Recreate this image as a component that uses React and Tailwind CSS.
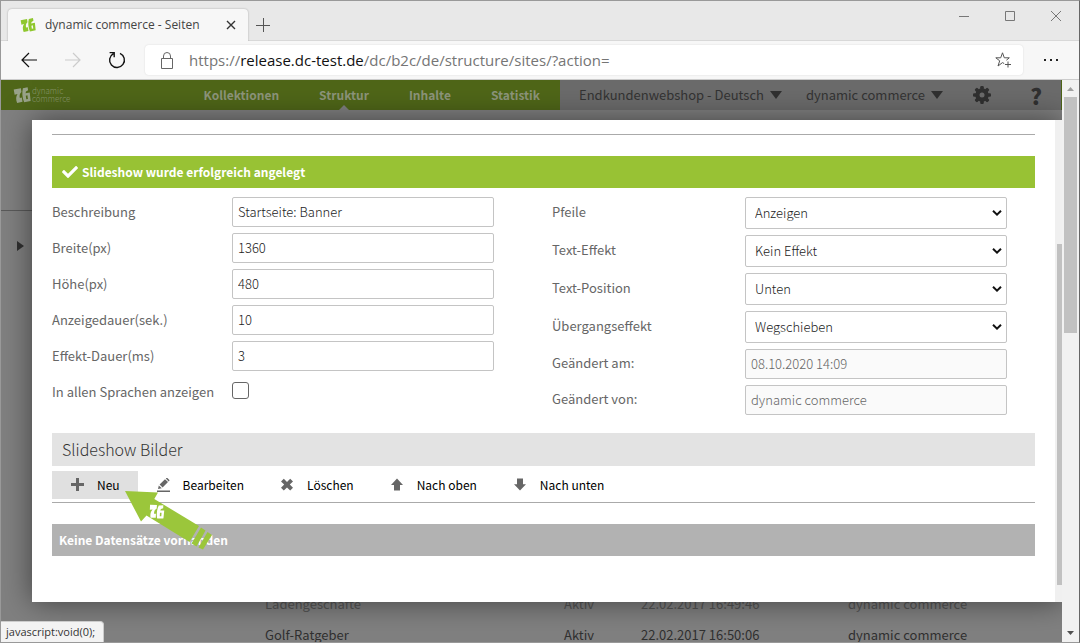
import { useState } from "react";
import { FaCheck } from "react-icons/fa";

const UI = "font-['Noto_Sans_CJK_SC','Noto_Sans',sans-serif]";
const CHROME = "font-['Open_Sans','Noto_Sans',sans-serif]";

function Mark({ color, ...rest }) {
  return (
    <svg viewBox="0 0 20 20" fill="none" aria-hidden="true" {...rest}>
      <path fill={color} d="M.8 4 8.8 2.4 9.4 6.6C7.4 8.4 7 10.4 7.6 13.2L9.8 12.8 10.6 17.6 4.6 18.8C3 14.8 3.2 11.4 5 8.8L1.8 9.6Z" />
      <path fill={color} fillRule="evenodd" d="M11 2.6 16.2 1.4 16.8 4.8 14.4 6.2 14 8 18.6 7.2 19.6 16.6 12.4 18C10.2 13 9.8 7.4 11 2.6ZM14.2 10.8 14.8 14.8 16.6 14.4 16 10.4Z" />
    </svg>
  );
}

function Gear() {
  return (
    <svg viewBox="0 0 18 18" className="h-[18px] w-[18px]" aria-hidden="true">
      <g fill="#303030">
        {[0, 45, 90, 135].map((a) => (
          <rect key={a} x="7.2" y="0" width="3.6" height="18" rx="1.2" transform={`rotate(${a} 9 9)`} />
        ))}
        <circle cx="9" cy="9" r="6.7" />
      </g>
      <circle cx="9" cy="9" r="2.5" fill="#6b6b6b" />
    </svg>
  );
}

function TitleBar() {
  return (
    <div className="flex h-10 shrink-0 items-end justify-between bg-[#e8e8e8] pl-[7px] shadow-[inset_0_-1px_0_#d8d8d8]">
      <div className="flex h-full items-end">
        <div className="flex h-8 w-60 items-center rounded-t bg-[#f7f7f7] pl-3 pr-3 shadow-[0_0_2px_rgba(0,0,0,0.3)]">
          <Mark className="h-4 w-4" color="#8fc72e" />
          <span className="ml-[9px] flex-1 whitespace-nowrap text-xs text-[#444]">dynamic commerce - Seiten</span>
          <button aria-label="Tab schließen" className="p-0">
            <svg viewBox="0 0 10 10" className="h-[10px] w-[10px]" stroke="#333" strokeWidth="1.4">
              <path d="M1 1 9 9M9 1 1 9" />
            </svg>
          </button>
        </div>
        <button aria-label="Neuer Tab" className="mb-[9px] ml-2">
          <svg viewBox="0 0 14 14" className="h-[14px] w-[14px]" stroke="#555">
            <path d="M0 7.5H14M7.5 0V14" />
          </svg>
        </button>
      </div>
      <div className="mb-5 mr-[18px] flex items-center gap-9">
        <button aria-label="Minimieren">
          <svg viewBox="0 0 10 10" className="h-[10px] w-[10px]" stroke="#777"><path d="M0 5.5H10" /></svg>
        </button>
        <button aria-label="Maximieren">
          <svg viewBox="0 0 10 10" className="h-[10px] w-[10px]" stroke="#777" fill="none"><path d="M.5.5H9.5V9.5H.5Z" /></svg>
        </button>
        <button aria-label="Schließen">
          <svg viewBox="0 0 10 10" className="h-[10px] w-[10px]" stroke="#777"><path d="M0 0 10 10M10 0 0 10" /></svg>
        </button>
      </div>
    </div>
  );
}

function AddressBar() {
  return (
    <div className="flex h-[39px] shrink-0 items-center border-b border-[#ccc] bg-[#f7f7f7] pl-5">
      <button aria-label="Zurück">
        <svg viewBox="0 0 16 16" className="h-4 w-4" fill="none" stroke="#111" strokeWidth="1.2"><path d="M16 8H1M8 1 1 8 8 15" /></svg>
      </button>
      <button aria-label="Vorwärts" className="ml-7">
        <svg viewBox="0 0 16 16" className="h-4 w-4" fill="none" stroke="#ccc" strokeWidth="1.2"><path d="M0 8H15M8 1 15 8 8 15" /></svg>
      </button>
      <button aria-label="Aktualisieren" className="ml-[27px]">
        <svg viewBox="0 0 18 18" className="h-[18px] w-[18px]" fill="none" stroke="#111" strokeWidth="1.4"><path d="M12 2.3A7.4 7.4 0 1 1 5.4 2.6M1.6 1.6H6.2V6.2" /></svg>
      </button>
      <div className="ml-[19px] flex h-[30px] flex-1 items-center rounded bg-white px-4 shadow-[0_0_2px_rgba(0,0,0,0.12)]">
        <svg viewBox="0 0 12 17" className="h-[17px] w-3 shrink-0" fill="none" stroke="#666"><path d="M.5 6.5H11.5V16.5H.5ZM2.5 6.5V4A3.5 3.5 0 0 1 9.5 4V6.5" /></svg>
        <p className="ml-4 flex-1 whitespace-nowrap text-[15px] leading-5 text-[#757575]">
          https://<span className="text-[#111]">release.dc-test.de</span>/dc/b2c/de/structure/sites/?action=
        </p>
        <button aria-label="Zu Favoriten hinzufügen" className="-mr-1">
          <svg viewBox="0 0 16 16" className="h-4 w-4" fill="none" stroke="#555"><path d="M9.2 11.6 7.5 10.6 3 14 4.7 8.8.8 5.8H5.7L7.5.8 9.3 5.8H14.3L11.4 8.2M13 9.5V15.5M10 12.5H16" /></svg>
        </button>
      </div>
      <button aria-label="Einstellungen und mehr" className="ml-5 mr-5">
        <svg viewBox="0 0 16 4" className="h-1 w-4" fill="#222"><path d="M1 1H3V3H1ZM7 1H9V3H7ZM13 1H15V3H13Z" /></svg>
      </button>
    </div>
  );
}

function Caret() {
  return (
    <svg viewBox="0 0 12 8" className="ml-1.5 h-2 w-3" fill="#303030"><path d="M0 0H12L6 8Z" /></svg>
  );
}

function ShopHeader() {
  return (
    <header className="flex h-[30px] shrink-0 border-r border-[#4d6417] bg-[#6b6b6b] text-[13px] leading-[30px]">
      <div className="flex w-[559px] shrink-0 items-center justify-between bg-[#4f6618]">
        <a href="#start" className="ml-3 flex items-center gap-px text-[#87956a]">
          <Mark className="h-[18px] w-[18px]" color="#99a38a" />
          <span className="block text-[8px] font-light leading-[8px]">dynamic<br />commerce</span>
        </a>
        <nav className="flex text-xs font-bold leading-[30px] text-[#8d957b]">
          <a href="#kollektionen" className="px-5">Kollektionen</a>
          <a href="#struktur" className="relative px-5">
            Struktur
            <svg viewBox="0 0 10 5" className="absolute bottom-0 left-1/2 h-[5px] w-[10px] -translate-x-1/2" fill="#808080"><path d="M0 5 5 0 10 5Z" /></svg>
          </a>
          <a href="#inhalte" className="px-5">Inhalte</a>
          <a href="#statistik" className="px-5">Statistik</a>
        </nav>
      </div>
      <div className="flex flex-1 items-center justify-between pl-[19px] pr-[19px] text-[#333]">
        <div className="flex">
          <button className="flex items-center whitespace-nowrap">Endkundenwebshop - Deutsch<Caret /></button>
          <button className="ml-6 flex items-center whitespace-nowrap">dynamic commerce<Caret /></button>
        </div>
        <div className="flex items-center gap-[39px]">
          <button aria-label="Einstellungen"><Gear /></button>
          <button aria-label="Hilfe" className="text-[22px] font-black leading-7 text-[#303030]">?</button>
        </div>
      </div>
    </header>
  );
}

const rows = [
  ["Ladengeschäfte", "Aktiv", "22.02.2017 16:49:46", "dynamic commerce", "text-[#555]"],
  ["Golf-Ratgeber", "Aktiv", "22.02.2017 16:50:06", "dynamic commerce", "text-[#303030]"],
];

function Backdrop() {
  return (
    <div className="flex min-h-0 flex-1 flex-col justify-between overflow-hidden bg-[#808080]">
      <aside className="w-[250px] pt-[100px]">
        <div className="border-t border-[#5a5a5a] pl-4 pt-[30px]">
          <svg viewBox="0 0 7 10" className="h-[10px] w-[7px]" fill="#303030"><path d="M0 0 7 5 0 10Z" /></svg>
        </div>
      </aside>
      <table className="-mb-2 ml-[264px] table-fixed text-[13px] leading-[31px]">
        <tbody>
          {rows.map(([name, state, date, user, tone]) => (
            <tr key={name} className={tone}>
              <td className="w-[299px] p-0">{name}</td>
              <td className="w-[77px] p-0">{state}</td>
              <td className="w-[207px] p-0">{date}</td>
              <td className="p-0">{user}</td>
            </tr>
          ))}
        </tbody>
      </table>
    </div>
  );
}

const leftLabel = "w-[180px] shrink-0 whitespace-nowrap text-[#666]";
const rightLabel = "w-[193px] shrink-0 whitespace-nowrap pb-0.5 text-[#666]";
const box = "h-[30px] w-full max-w-[262px] rounded-xs border border-[#c4c4c4] px-[5px] pb-0.5 font-light";

function TextRow({ id, name, value }) {
  return (
    <div className="flex items-center">
      <label htmlFor={id} className={leftLabel}>{name}</label>
      <input id={id} type="text" defaultValue={value} className={`${box} bg-white text-[#222]`} />
    </div>
  );
}

function ReadOnlyRow({ id, name, value }) {
  return (
    <div className="mb-1.5 flex items-center">
      <label htmlFor={id} className={rightLabel}>{name}</label>
      <input id={id} type="text" readOnly value={value} className={`${box} bg-[#fafafa] text-[#666]`} />
    </div>
  );
}

function SelectRow({ id, name, value }) {
  return (
    <div className="mb-1.5 flex items-center">
      <label htmlFor={id} className={rightLabel}>{name}</label>
      <div className="relative w-full max-w-[262px]">
        <select id={id} defaultValue={value} className="h-8 w-full appearance-none rounded-xs border border-[#c4c4c4] bg-white px-[9px] font-light text-[#222]">
          <option>{value}</option>
        </select>
        <svg viewBox="0 0 10 6" className="pointer-events-none absolute right-[5px] top-[13px] h-1.5 w-[10px]" fill="none" stroke="#111" strokeWidth="2"><path d="M1 .8 5 4.6 9 .8" /></svg>
      </div>
    </div>
  );
}

const icons = {
  plus: <path d="M5 0H8V5H13V8H8V13H5V8H0V5H5Z" />,
  edit: <path d="M0 12.4H13V14H0ZM1 11 1.8 7.4 4.8 10.2ZM2.6 6.6 8 1.2 11 4 5.6 9.4ZM8.8.6 9.4 0H10.4L12.4 2V2.8L11.7 3.4Z" />,
  cross: <path d="M0 3.4 2.8.8 6 4 9.2.8 12 3.4 8.8 6.6 12 9.8 9.2 12.6 6 9.4 2.8 12.6 0 9.8 3.2 6.6Z" />,
  up: <path d="M6 .6 12 7H9V12.6H3V7H0Z" />,
  down: <path d="M6 12.6 0 6.2H3V.6H9V6.2H12Z" />,
};

function Tool({ icon, text, className = "" }) {
  return (
    <button className={`flex h-7 items-center gap-[13px] whitespace-nowrap pl-[19px] pr-[18px] text-xs text-black ${className}`}>
      <svg viewBox="0 0 13 14" className="h-[14px] w-[13px]" fill="#666">{icons[icon]}</svg>
      {text}
    </button>
  );
}

function Pointer() {
  return (
    <svg viewBox="0 0 90 62" className="pointer-events-none absolute left-[92px] top-[369px] h-[62px] w-[90px]" aria-hidden="true">
      <g fill="#9bc63b">
        <path d="M1 2 34 3.5 30.3 10 75 37 65.5 53 22.5 26.5 17 32.5Z" />
        <path d="M77 38.5 81.5 41.5 72.5 57.5 67.5 54.5Z" />
        <path d="M83.5 43 88 46 79 60.5 74.5 58.5Z" />
      </g>
      <g transform="rotate(12 33 23)"><Mark x="24" y="14" width="17" height="17" color="#fff" /></g>
    </svg>
  );
}

function Dialog() {
  const [all, setAll] = useState(false);
  return (
    <section role="dialog" aria-label="Slideshow" className="absolute bottom-10 left-[31px] right-0 top-10 flex bg-white shadow-[0_0_28px_rgba(0,0,0,0.5)]">
      <div className="min-w-0 flex-1 overflow-hidden pl-5 pr-5 pt-[14px] text-[13px] leading-5">
        <hr className="border-[#aaa]" />
        <p className="mt-[21px] flex h-8 items-center gap-1 bg-[#98c234] pl-[10px] text-xs font-bold text-white">
          <FaCheck className="h-4 w-4" />
          Slideshow wurde erfolgreich angelegt
        </p>
        <form className="mt-[9px] grid grid-cols-[500fr_483fr]">
          <div className="flex flex-col gap-1.5">
            <TextRow id="desc" name="Beschreibung" value="Startseite: Banner" />
            <TextRow id="width" name="Breite(px)" value="1360" />
            <TextRow id="height" name="Höhe(px)" value="480" />
            <TextRow id="show" name="Anzeigedauer(sek.)" value="10" />
            <TextRow id="fx" name="Effekt-Dauer(ms)" value="3" />
            <div className="flex h-[30px] items-center">
              <label htmlFor="all" className={leftLabel}>In allen Sprachen anzeigen</label>
              <input id="all" type="checkbox" checked={all} onChange={(e) => setAll(e.target.checked)} className="mb-1 h-[17px] w-[17px] appearance-none rounded-[3px] border border-[#666] bg-white checked:bg-[#98c234]" />
            </div>
          </div>
          <div>
            <SelectRow id="arrows" name="Pfeile" value="Anzeigen" />
            <SelectRow id="textfx" name="Text-Effekt" value="Kein Effekt" />
            <SelectRow id="textpos" name="Text-Position" value="Unten" />
            <SelectRow id="trans" name="Übergangseffekt" value="Wegschieben" />
            <ReadOnlyRow id="changed" name="Geändert am:" value="08.10.2020 14:09" />
            <ReadOnlyRow id="by" name="Geändert von:" value="dynamic commerce" />
          </div>
        </form>
        <h2 className="mt-3 h-[33px] bg-[#e3e3e3] pl-[10px] text-base font-light leading-[33px] text-[#333]">Slideshow Bilder</h2>
        <div className="mt-[5px] flex border-b border-[#aaa] pb-[3px]">
          <Tool icon="plus" text="Neu" className="bg-[#e0e0e0]" />
          <Tool icon="edit" text="Bearbeiten" />
          <Tool icon="cross" text="Löschen" />
          <Tool icon="up" text="Nach oben" />
          <Tool icon="down" text="Nach unten" />
        </div>
        <p className="mt-[21px] h-8 bg-[#b2b2b2] pl-[7px] text-xs font-bold leading-8 text-white">Keine Datensätze vorhanden</p>
      </div>
      <div className="flex w-[7px] flex-col items-end bg-[#f0f0f0] pb-[17px] pt-[124px]">
        <div className="w-[5px] flex-1 bg-[#c1c1c1]" />
      </div>
      <Pointer />
    </section>
  );
}

function PageScrollbar() {
  return (
    <div className="flex w-[17px] shrink-0 flex-col items-center justify-between bg-[#f1f1f1]">
      <div>
        <svg viewBox="0 0 17 17" className="h-[17px] w-[17px]" fill="#a0a0a0"><path d="M5 11 8.5 7 12 11Z" /></svg>
        <div className="mx-auto h-[236px] w-[13px] bg-[#c1c1c1]" />
      </div>
      <svg viewBox="0 0 17 17" className="h-[17px] w-[17px]" fill="#505050"><path d="M5 6 8.5 10 12 6Z" /></svg>
    </div>
  );
}

export default function App() {
  return (
    <div className={`flex h-screen flex-col overflow-hidden border border-[#999] border-r-[#666] bg-[#f7f7f7] ${CHROME}`}>
      <TitleBar />
      <AddressBar />
      <div className="relative flex min-h-0 flex-1">
        <main className={`relative flex min-w-0 flex-1 flex-col overflow-hidden ${UI}`}>
          <ShopHeader />
          <Backdrop />
          <Dialog />
        </main>
        <PageScrollbar />
        <div className="absolute bottom-0 left-0 h-[21px] rounded-tr border-r border-t border-[#ccc] bg-[#f3f3f3] pl-[5px] pr-2 text-[11px] leading-5 text-[#333]">
          javascript:void(0);
        </div>
      </div>
    </div>
  );
}
